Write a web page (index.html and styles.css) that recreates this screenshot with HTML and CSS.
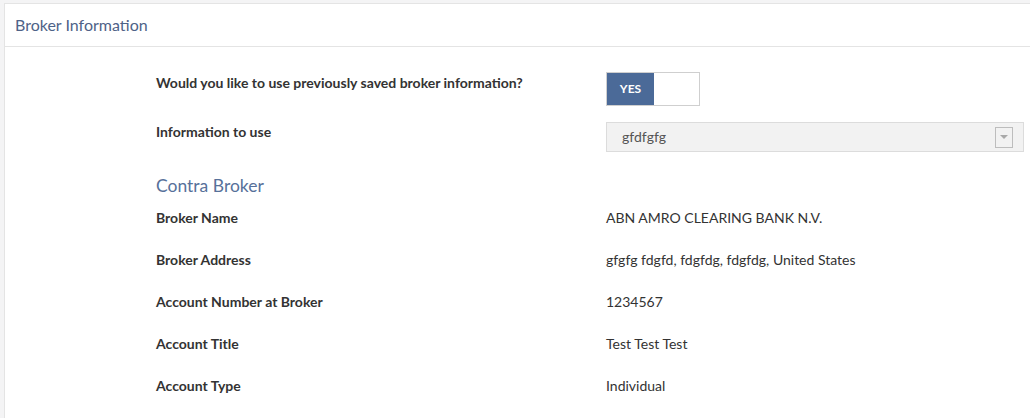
FILE: index.html
```html
<!DOCTYPE html>
<html>
<head>
<meta charset="utf-8">
<link rel="stylesheet" href="styles.css">
</head>
<body>
<div class="panel">
  <div class="panel-header">Broker Information</div>
  <div class="panel-body">
    <div class="row row-toggle">
      <div class="label">Would you like to use previously saved broker information?</div>
      <div class="value">
        <div class="toggle"><span class="toggle-on">YES</span><span class="toggle-off"></span></div>
      </div>
    </div>
    <div class="row row-select">
      <div class="label">Information to use</div>
      <div class="value">
        <div class="select">
          <span class="select-text">gfdfgfg</span>
          <span class="select-arrow"><span class="tri"></span></span>
        </div>
      </div>
    </div>
    <h2 class="section-title">Contra Broker</h2>
    <div class="row row-data">
      <div class="label">Broker Name</div>
      <div class="value">ABN AMRO CLEARING BANK N.V.</div>
    </div>
    <div class="row row-data">
      <div class="label">Broker Address</div>
      <div class="value">gfgfg fdgfd, fdgfdg, fdgfdg, United States</div>
    </div>
    <div class="row row-data">
      <div class="label">Account Number at Broker</div>
      <div class="value">1234567</div>
    </div>
    <div class="row row-data">
      <div class="label">Account Title</div>
      <div class="value">Test Test Test</div>
    </div>
    <div class="row row-data">
      <div class="label">Account Type</div>
      <div class="value">Individual</div>
    </div>
  </div>
</div>
</body>
</html>
```

FILE: styles.css
```css
html, body {
  margin: 0;
  padding: 0;
  height: 418px;
  background: #f4f4f5;
  font-family: Lato, "Open Sans", Arial, sans-serif;
  color: #333;
  overflow: hidden;
}
.panel {
  margin: 3px -20px 0 4px;
  background: #fff;
  border: 1px solid #e4e4e4;
  border-bottom: 0;
  height: 415px;
  box-sizing: border-box;
  overflow: hidden;
}
.panel-header {
  height: 42px;
  line-height: 42px;
  padding-left: 10px;
  font-size: 16px;
  color: #4e6287;
  border-bottom: 1px solid #e4e4e4;
}
.panel-body {
  padding: 25px 0 0 151px;
}
.row {
  display: grid;
  grid-template-columns: 450px 418px;
  font-size: 14px;
}
.label {
  font-weight: 700;
  line-height: 20px;
  color: #333;
}
.value {
  line-height: 20px;
}
.row-toggle {
  height: 34px;
  margin-bottom: 16px;
}
.row-toggle .label {
  padding-top: 1px;
}
.toggle {
  display: flex;
  width: 92px;
  height: 32px;
  border: 1px solid #cfcfcf;
  background: #fff;
}
.toggle-on {
  width: 47px;
  background: #4b6a98;
  color: #fff;
  font-weight: 700;
  font-size: 12px;
  line-height: 32px;
  text-align: center;
}
.row-select {
  height: 30px;
}
.select {
  display: flex;
  align-items: center;
  justify-content: space-between;
  box-sizing: border-box;
  height: 30px;
  background: #f2f2f2;
  border: 1px solid #dcdcdc;
  padding: 0 10px 0 15px;
  color: #555;
}
.select-arrow {
  box-sizing: border-box;
  width: 18px;
  height: 21px;
  border: 1px solid #bdbdbd;
  display: flex;
  align-items: center;
  justify-content: center;
}
.tri {
  width: 0;
  height: 0;
  border-left: 4px solid transparent;
  border-right: 4px solid transparent;
  border-top: 4px solid #a9a9a9;
}
.section-title {
  margin: 22px 0 10px 0;
  font-size: 17.5px;
  font-weight: 400;
  line-height: 24px;
  color: #57719a;
}
.row-data {
  height: 42px;
}
```
